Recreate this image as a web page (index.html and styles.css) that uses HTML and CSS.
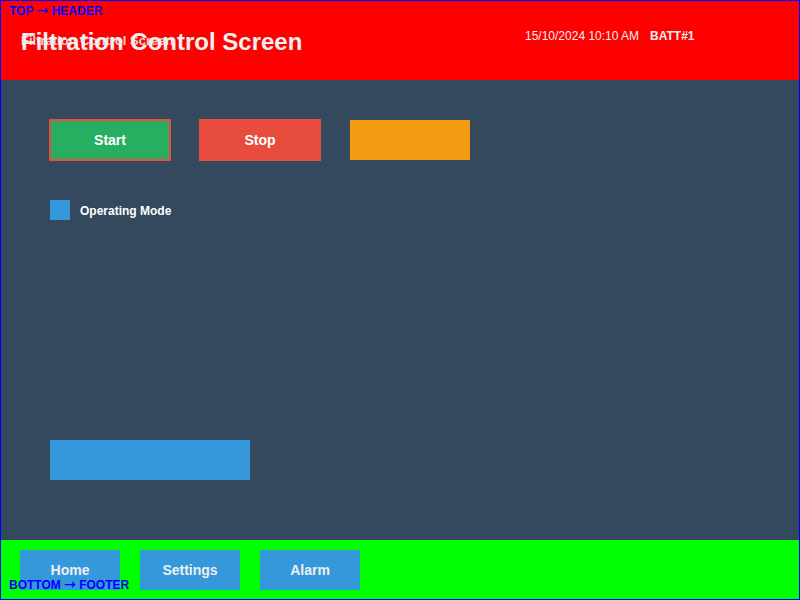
FILE: index.html
```html
<!DOCTYPE html>
<html>
<head>
<meta charset="utf-8">
<link rel="stylesheet" href="styles.css">
</head>
<body>
<div class="screen">
  <header class="header">
    <span class="tag tag-top">TOP <span class="arrow">→</span> HEADER</span>
    <div class="title-wrap">
      <h1 class="title">Filtration Control Screen</h1>
      <span class="title-small">Filtration Control Screen</span>
    </div>
    <div class="status">
      <span class="datetime">15/10/2024 10:10 AM</span>
      <span class="batt">BATT#1</span>
    </div>
  </header>
  <main class="main">
    <div class="controls">
      <div class="btn btn-start">Start</div>
      <div class="btn btn-stop">Stop</div>
      <div class="btn btn-orange"></div>
    </div>
    <div class="mode">
      <span class="mode-box"></span>
      <span class="mode-label">Operating Mode</span>
    </div>
    <div class="bar"></div>
  </main>
  <footer class="footer">
    <div class="nav">Home</div>
    <div class="nav">Settings</div>
    <div class="nav">Alarm</div>
    <span class="tag tag-bottom">BOTTOM <span class="arrow">→</span> FOOTER</span>
  </footer>
</div>
</body>
</html>
```
FILE: styles.css
```css
* { box-sizing: border-box; }
html, body { margin: 0; padding: 0; }
body {
  font-family: "Liberation Sans", Arial, sans-serif;
  background: #34495e;
}
.screen {
  width: 800px;
  height: 600px;
  border: 1px solid #0000ff;
  display: flex;
  flex-direction: column;
  position: relative;
  overflow: hidden;
}
.header {
  height: 79px;
  background: #ff0000;
  position: relative;
  display: flex;
  align-items: flex-start;
  padding: 0 0 0 20px;
}
.tag {
  position: absolute;
  color: #0000ff;
  font-weight: bold;
  font-size: 12px;
  line-height: 14px;
  white-space: nowrap;
}
.arrow {
  font-family: "DejaVu Sans", sans-serif;
  font-weight: normal;
  font-size: 14px;
  line-height: 12px;
}
.tag-top { left: 8px; top: 3px; }
.tag-bottom { left: 8px; bottom: 7px; }
.title-wrap {
  position: relative;
  margin-top: 27px;
  width: 504px;
}
.title {
  margin: 0;
  font-size: 24px;
  line-height: 28px;
  font-weight: bold;
  color: #ecf0f1;
  white-space: nowrap;
}
.title-small {
  position: absolute;
  left: 0;
  top: 5px;
  font-size: 13px;
  line-height: 16px;
  font-weight: bold;
  color: #ecf0f1;
  opacity: 0.85;
  white-space: nowrap;
}
.status {
  display: flex;
  gap: 11px;
  margin-top: 28px;
  font-size: 12px;
  line-height: 14px;
  color: #ecf0f1;
  white-space: nowrap;
}
.batt { font-weight: bold; }
.main {
  height: 460px;
  background: #34495e;
  padding: 39px 0 0 48px;
}
.controls {
  display: flex;
  align-items: center;
}
.btn {
  display: flex;
  align-items: center;
  justify-content: center;
  color: #ffffff;
  font-weight: bold;
  font-size: 14px;
}
.btn-start {
  width: 122px;
  height: 42px;
  background: #27ae60;
  border: 2px solid #e74c3c;
}
.btn-stop {
  width: 122px;
  height: 42px;
  background: #e74c3c;
  margin-left: 28px;
}
.btn-orange {
  width: 120px;
  height: 40px;
  background: #f39c12;
  margin-left: 29px;
}
.mode {
  display: flex;
  align-items: center;
  gap: 10px;
  margin: 39px 0 0 1px;
  height: 20px;
}
.mode-box {
  width: 20px;
  height: 20px;
  background: #3498db;
}
.mode-label {
  color: #ffffff;
  font-weight: bold;
  font-size: 12px;
  line-height: 14px;
  padding-top: 2px;
}
.bar {
  width: 200px;
  height: 40px;
  background: #3498db;
  margin: 220px 0 0 1px;
}
.footer {
  flex: 1;
  background: #00ff00;
  position: relative;
  display: flex;
  gap: 20px;
  padding: 10px 0 0 19px;
}
.nav {
  width: 100px;
  height: 40px;
  background: #3498db;
  color: #ecf0f1;
  font-weight: bold;
  font-size: 14px;
  display: flex;
  align-items: center;
  justify-content: center;
}
```
